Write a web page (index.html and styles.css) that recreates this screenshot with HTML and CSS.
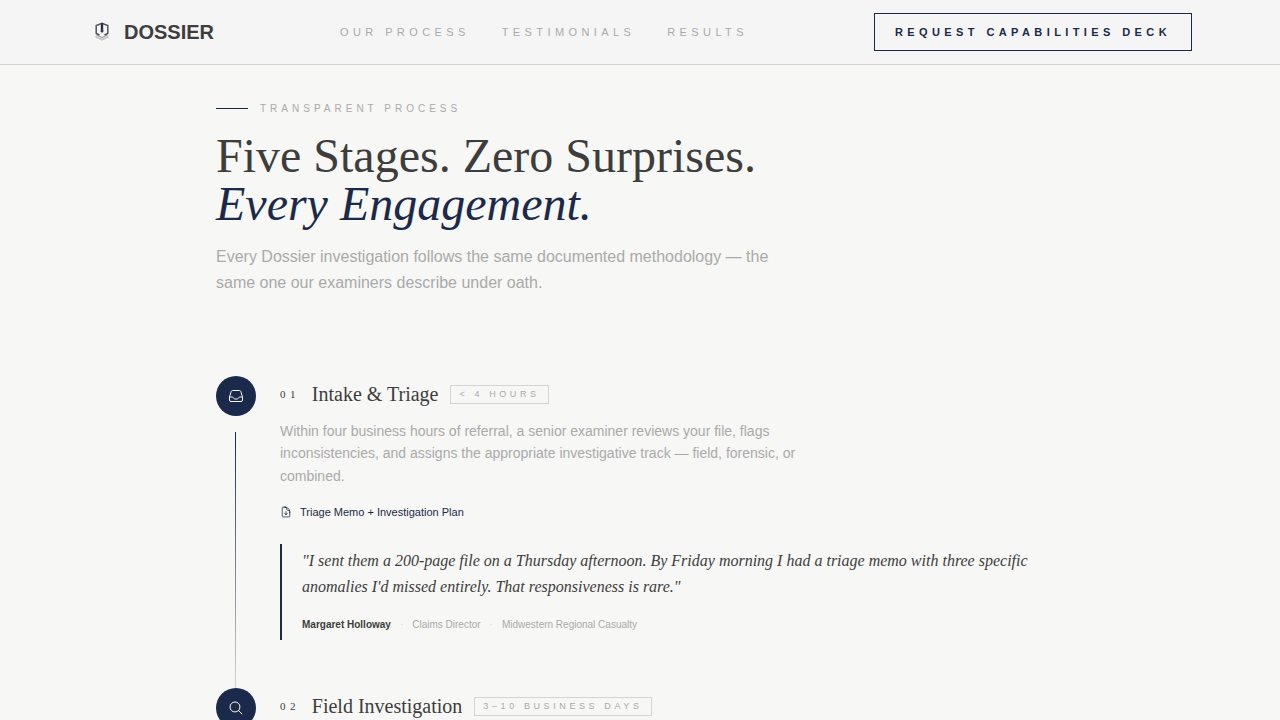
FILE: index.html
```html
<!DOCTYPE html>
<html lang="en">
<head>
  <meta charset="UTF-8" />
  <meta name="viewport" content="width=device-width, initial-scale=1.0"/>
  <title>Dossier | Our Process</title>
  <link rel="stylesheet" href="styles.css">
</head>
<body>

  <header class="site-header">
    <div class="header-inner">
      <a class="logo" href="#">
        <svg class="logo-mark" viewBox="0 0 28 28" fill="none" aria-hidden="true">
          <path d="M7.500 17.500v2L14 22.800l6.500-3.300v-2L14 20.800z" fill="#c4c4c4"/>
          <path d="M8 16.500 14 19.600l6-3.100" stroke="#a2a2a4" stroke-width="1.200"/>
          <path d="M11.500 17 8.200 15.300V7.600L14 5.400l5.800 2.200v7.700L16.500 17" stroke="#50535c" stroke-width="1.500"/>
          <path d="M12.800 5.200h2.400v7.300h-2.400z" fill="#2c3040"/>
          <circle cx="14" cy="13" r="1.500" fill="#3a3e4c"/>
        </svg>
        <span>DOSSIER</span>
      </a>

      <nav class="main-nav">
        <a href="#process">Our Process</a>
        <a href="#testimonials">Testimonials</a>
        <a href="#results">Results</a>
      </nav>

      <button class="deck-btn" type="button">Request Capabilities Deck</button>
    </div>
  </header>

  <main class="process" id="process">
    <div class="intro">
      <p class="eyebrow">Transparent Process</p>
      <h1>Five Stages. Zero Surprises.<br><em>Every Engagement.</em></h1>
      <p class="lead">Every Dossier investigation follows the same documented methodology — the same one our examiners describe under oath.</p>
    </div>

    <ol class="stages">
      <li class="stage">
        <div class="stage-rail">
          <div class="stage-icon">
            <svg viewBox="0 0 24 24" aria-hidden="true">
              <path d="M2.250 13.500h3.860a2.250 2.250 0 0 1 2.012 1.244l.256.512a2.250 2.250 0 0 0 2.013 1.244h3.218a2.250 2.250 0 0 0 2.013-1.244l.256-.512a2.250 2.250 0 0 1 2.013-1.244h3.859m-19.500.338V18a2.250 2.250 0 0 0 2.250 2.250h15A2.250 2.250 0 0 0 21.750 18v-4.162c0-.224-.034-.447-.1-.661L19.240 5.338a2.250 2.250 0 0 0-2.150-1.588H6.911a2.250 2.250 0 0 0-2.150 1.588L2.350 13.177a2.250 2.250 0 0 0-.1.661Z"/>
            </svg>
          </div>
          <div class="stage-line"></div>
        </div>
        <div class="stage-body">
          <div class="stage-head">
            <span class="stage-num">01</span>
            <h2>Intake &amp; Triage</h2>
            <span class="stage-time">&lt; 4 hours</span>
          </div>
          <p class="stage-desc">Within four business hours of referral, a senior examiner reviews your file, flags inconsistencies, and assigns the appropriate investigative track — field, forensic, or combined.</p>
          <p class="deliverable">
            <svg viewBox="0 0 24 24" aria-hidden="true">
              <path d="M19.500 14.250v-2.625a3.375 3.375 0 0 0-3.375-3.375h-1.500A1.125 1.125 0 0 1 13.500 7.125v-1.500a3.375 3.375 0 0 0-3.375-3.375H8.250m.75 12 3 3m0 0 3-3m-3 3v-6m-1.500-9H5.625c-.621 0-1.125.504-1.125 1.125v17.250c0 .621.504 1.125 1.125 1.125h12.750c.621 0 1.125-.504 1.125-1.125V11.250a9 9 0 0 0-9-9Z"/>
            </svg>
            Triage Memo + Investigation Plan
          </p>
          <blockquote class="quote">
            <p>"I sent them a 200-page file on a Thursday afternoon. By Friday morning I had a triage memo with three specific anomalies I'd missed entirely. That responsiveness is rare."</p>
            <footer>
              <strong>Margaret Holloway</strong>
              <span class="dot">·</span>
              <span>Claims Director</span>
              <span class="dot">·</span>
              <span>Midwestern Regional Casualty</span>
            </footer>
          </blockquote>
        </div>
      </li>

      <li class="stage">
        <div class="stage-rail">
          <div class="stage-icon">
            <svg viewBox="0 0 24 24" aria-hidden="true">
              <path d="m21 21-5.197-5.197m0 0A7.500 7.500 0 1 0 5.196 5.196a7.500 7.500 0 0 0 10.607 10.607Z"/>
            </svg>
          </div>
        </div>
        <div class="stage-body">
          <div class="stage-head">
            <span class="stage-num">02</span>
            <h2>Field Investigation</h2>
            <span class="stage-time">3–10 business days</span>
          </div>
        </div>
      </li>
    </ol>
  </main>

</body>
</html>
```
FILE: styles.css
```css
:root {
  --bg: #f7f7f5;
  --header-bg: #f5f5f5;
  --ink: #3d3d3d;
  --navy: #1b2a4a;
  --muted: #aaaaaa;
  --border: #d4d4d4;
  --sans: "Liberation Sans", Arial, sans-serif;
  --serif: "Liberation Serif", "Times New Roman", serif;
}

* {
  box-sizing: border-box;
  margin: 0;
  padding: 0;
}

body {
  font-family: var(--sans);
  background: var(--bg);
  color: var(--ink);
}

a {
  color: inherit;
  text-decoration: none;
}

/* Header */
.site-header {
  background: var(--header-bg);
  border-bottom: 1px solid var(--border);
}

.header-inner {
  display: flex;
  align-items: center;
  justify-content: space-between;
  max-width: 1200px;
  min-height: 64px;
  margin: 0 auto;
  padding: 0 48px;
}

.logo {
  display: flex;
  align-items: center;
  gap: 8px;
  font-size: 20px;
  font-weight: 700;
}

.logo-mark {
  width: 28px;
  height: 28px;
}

.main-nav {
  display: flex;
  gap: 32px;
  font-size: 11px;
  letter-spacing: 0.4em;
  text-transform: uppercase;
  color: var(--muted);
}

.deck-btn {
  padding: 12px 20px;
  font-family: inherit;
  font-size: 11px;
  font-weight: 700;
  line-height: 12px;
  letter-spacing: 0.4em;
  text-transform: uppercase;
  color: var(--navy);
  background: transparent;
  border: 1px solid var(--navy);
  cursor: pointer;
}

/* Intro */
.process {
  max-width: 896px;
  margin: 0 auto;
  padding: 36px 24px;
}

.eyebrow {
  display: flex;
  align-items: center;
  gap: 12px;
  margin-bottom: 16px;
  font-size: 10px;
  line-height: 15px;
  letter-spacing: 0.4em;
  text-transform: uppercase;
  color: var(--muted);
}

.eyebrow::before {
  content: "";
  width: 32px;
  height: 1px;
  background: var(--navy);
}

h1 {
  margin-bottom: 16px;
  font-family: var(--serif);
  font-size: 48px;
  font-weight: 400;
  line-height: 48px;
}

h1 em {
  color: var(--navy);
}

.lead {
  max-width: 576px;
  margin-bottom: 80px;
  font-size: 16px;
  line-height: 26px;
  color: var(--muted);
}

/* Stages */
.stages {
  list-style: none;
}

.stage {
  display: flex;
  gap: 24px;
}

.stage-rail {
  display: flex;
  flex-direction: column;
  align-items: center;
  gap: 16px;
  width: 40px;
  flex-shrink: 0;
}

.stage-icon {
  display: flex;
  align-items: center;
  justify-content: center;
  width: 40px;
  height: 40px;
  border-radius: 50%;
  color: var(--bg);
  background: var(--navy);
}

.stage svg {
  width: 16px;
  height: 16px;
  fill: none;
  stroke: currentColor;
  stroke-width: 1.5;
  stroke-linecap: round;
  stroke-linejoin: round;
}

.stage-line {
  flex: 1;
  width: 2px;
  background: linear-gradient(to bottom, var(--navy), var(--border)) left / 1px 100% no-repeat;
}

.stage-body {
  flex: 1;
  padding: 4px 0 48px;
}

.stage-head {
  display: flex;
  align-items: center;
  gap: 12px;
  margin-bottom: 12px;
}

.stage-num {
  font-family: var(--serif);
  font-size: 11px;
  letter-spacing: 0.4em;
}

h2 {
  font-family: var(--serif);
  font-size: 20px;
  font-weight: 400;
  line-height: 28px;
}

.stage-time {
  padding: 2px 8px;
  font-size: 9px;
  line-height: 13px;
  letter-spacing: 0.4em;
  text-transform: uppercase;
  color: var(--muted);
  border: 1px solid var(--border);
}

.stage-desc {
  max-width: 520px;
  margin-bottom: 16px;
  font-size: 14px;
  line-height: 1.6;
  color: var(--muted);
}

.deliverable {
  display: flex;
  align-items: center;
  gap: 8px;
  margin-bottom: 23px;
  font-size: 11px;
  line-height: 18px;
  color: var(--navy);
}

.stage .deliverable svg {
  width: 12px;
  height: 12px;
}

.quote {
  padding: 4px 0 6px 20px;
  border-left: 2px solid var(--navy);
}

.quote p {
  margin-bottom: 16px;
  font-family: var(--serif);
  font-size: 16px;
  font-style: italic;
  line-height: 26px;
}

.quote footer {
  display: flex;
  align-items: center;
  gap: 9px;
  font-size: 10px;
  line-height: 18px;
  color: var(--muted);
}

.quote strong {
  color: var(--ink);
}

.dot {
  color: var(--border);
}
```
